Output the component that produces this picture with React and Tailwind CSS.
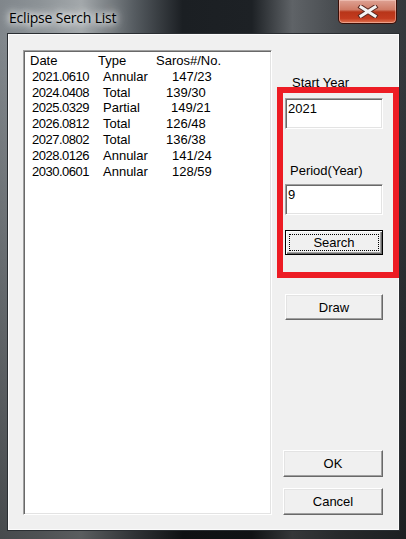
const rows = [
  { date: "2021.0610", type: "Annular", saros: "147/23", pad: "pl-[6px]" },
  { date: "2024.0408", type: "Total", saros: "139/30", pad: "pl-[0px]" },
  { date: "2025.0329", type: "Partial", saros: "149/21", pad: "pl-[5px]" },
  { date: "2026.0812", type: "Total", saros: "126/48", pad: "pl-[0px]" },
  { date: "2027.0802", type: "Total", saros: "136/38", pad: "pl-[0px]" },
  { date: "2028.0126", type: "Annular", saros: "141/24", pad: "pl-[6px]" },
  { date: "2030.0601", type: "Annular", saros: "128/59", pad: "pl-[6px]" },
];

const raised =
  "bg-[#f0f0f0] border border-t-white border-l-white border-b-[#696969] border-r-[#696969] shadow-[inset_-1px_-1px_0_#a0a0a0,inset_1px_1px_0_#e3e3e3]";
const sunken =
  "bg-white border border-t-[#a0a0a0] border-l-[#a0a0a0] border-b-white border-r-white shadow-[inset_1px_1px_0_#696969,inset_-1px_-1px_0_#e3e3e3]";

const CloseGlyph = () => (
  <svg width="22" height="13" viewBox="0 0 22 13">
    <path d="M4 2 L18 11 M18 2 L4 11" stroke="#5a2a22" strokeWidth="5" strokeLinecap="square" fill="none" />
    <path d="M4 2 L18 11 M18 2 L4 11" stroke="#f4f4f4" strokeWidth="3" strokeLinecap="square" fill="none" />
  </svg>
);

const App = () => {
  return (
    <div className="w-[406px] h-[539px] flex flex-col font-['Liberation_Sans',Arial,sans-serif] text-[13px] text-black bg-[linear-gradient(to_bottom,transparent_40px,rgba(0,0,0,0.45)),linear-gradient(to_right,#80868b_0%,#8d9397_10%,#a3a8ab_20%,#565c61_33%,#1b1f23_45%,#1d2125_62%,#5f6367_72%,#45494d_84%,#34383c_100%)]">
      {/* title bar */}
      <div className="h-[33px] shrink-0 flex items-start">
        <div className="flex-1 pl-[9px] pt-[8px] text-[14px] leading-[20px] font-['Open_Sans',sans-serif] tracking-[-0.2px] text-black [text-shadow:0_0_6px_#fff,0_0_10px_#fff,0_0_14px_#e8ecef]">
          Eclipse Serch List
        </div>
        <button className="mr-[9px] w-[59px] h-[24px] flex items-center justify-center rounded-b-[5px] border border-[#3a0f08] border-t-0 bg-[linear-gradient(to_bottom,#dea294_0%,#cf7b66_42%,#b83519_52%,#c33b1f_80%,#e07552_100%)] shadow-[inset_0_0_0_1px_rgba(255,220,210,0.45)]">
          <CloseGlyph />
        </button>
      </div>

      {/* client area */}
      <div className="flex-1 flex pl-[7px] pr-[8px] pb-[8px]">
        <div className="flex-1 flex bg-[#f0f0f0] border border-[#2a2e32] shadow-[inset_0_0_0_1px_#fbfbfb] pt-[16px] pb-[15px] pl-[15px]">
          {/* list box */}
          <div className={`w-[249px] shrink-0 ${sunken} pt-[2px] leading-[15.8px]`}>
            <div className="flex pl-[6px]">
              <span className="w-[68px]">Date</span>
              <span className="w-[58px]">Type</span>
              <span>Saros#/No.</span>
            </div>
            {rows.map((r) => (
              <div key={r.date} className="flex pl-[8px]">
                <span className="w-[71px] tracking-[-0.5px]">{r.date}</span>
                <span className="w-[63px]">{r.type}</span>
                <span className={r.pad}>{r.saros}</span>
              </div>
            ))}
          </div>

          {/* right column */}
          <div className="ml-[5px] w-[122px] shrink-0 flex flex-col">
            <div className="mt-[25px] pl-[15px] leading-[15px]">Start Year</div>
            <div className="relative mt-[-3px] h-[191px] border-[6px] border-[#ed1c24] flex flex-col pt-[5px]">
              <div className={`ml-[2px] w-[98px] h-[31px] ${sunken} pl-[2px] pt-[2px] leading-[15px]`}>2021</div>
              <div className="mt-[34px] pl-[7px] leading-[15px]">Period(Year)</div>
              <div className={`mt-[6px] ml-[2px] w-[98px] h-[31px] ${sunken} pl-[2px] pt-[2px] leading-[15px]`}>9</div>
              <button className="mt-[15px] ml-[2px] w-[98px] h-[25px] flex p-[3px] bg-[#f0f0f0] border border-black shadow-[inset_1px_1px_0_#fff,inset_-1px_-1px_0_#696969,inset_-2px_-2px_0_#a0a0a0]">
                <span className="flex-1 flex items-center justify-center border border-dotted border-black leading-[15px]">
                  Search
                </span>
              </button>
            </div>
            <button className={`mt-[16px] ml-[8px] w-[98px] h-[26px] ${raised} leading-[15px]`}>Draw</button>
            <button className={`mt-auto ml-[6px] w-[100px] h-[27px] ${raised} leading-[15px]`}>OK</button>
            <button className={`mt-[11px] ml-[6px] w-[100px] h-[27px] ${raised} leading-[15px]`}>Cancel</button>
          </div>
        </div>
      </div>
    </div>
  );
};

export default App;
